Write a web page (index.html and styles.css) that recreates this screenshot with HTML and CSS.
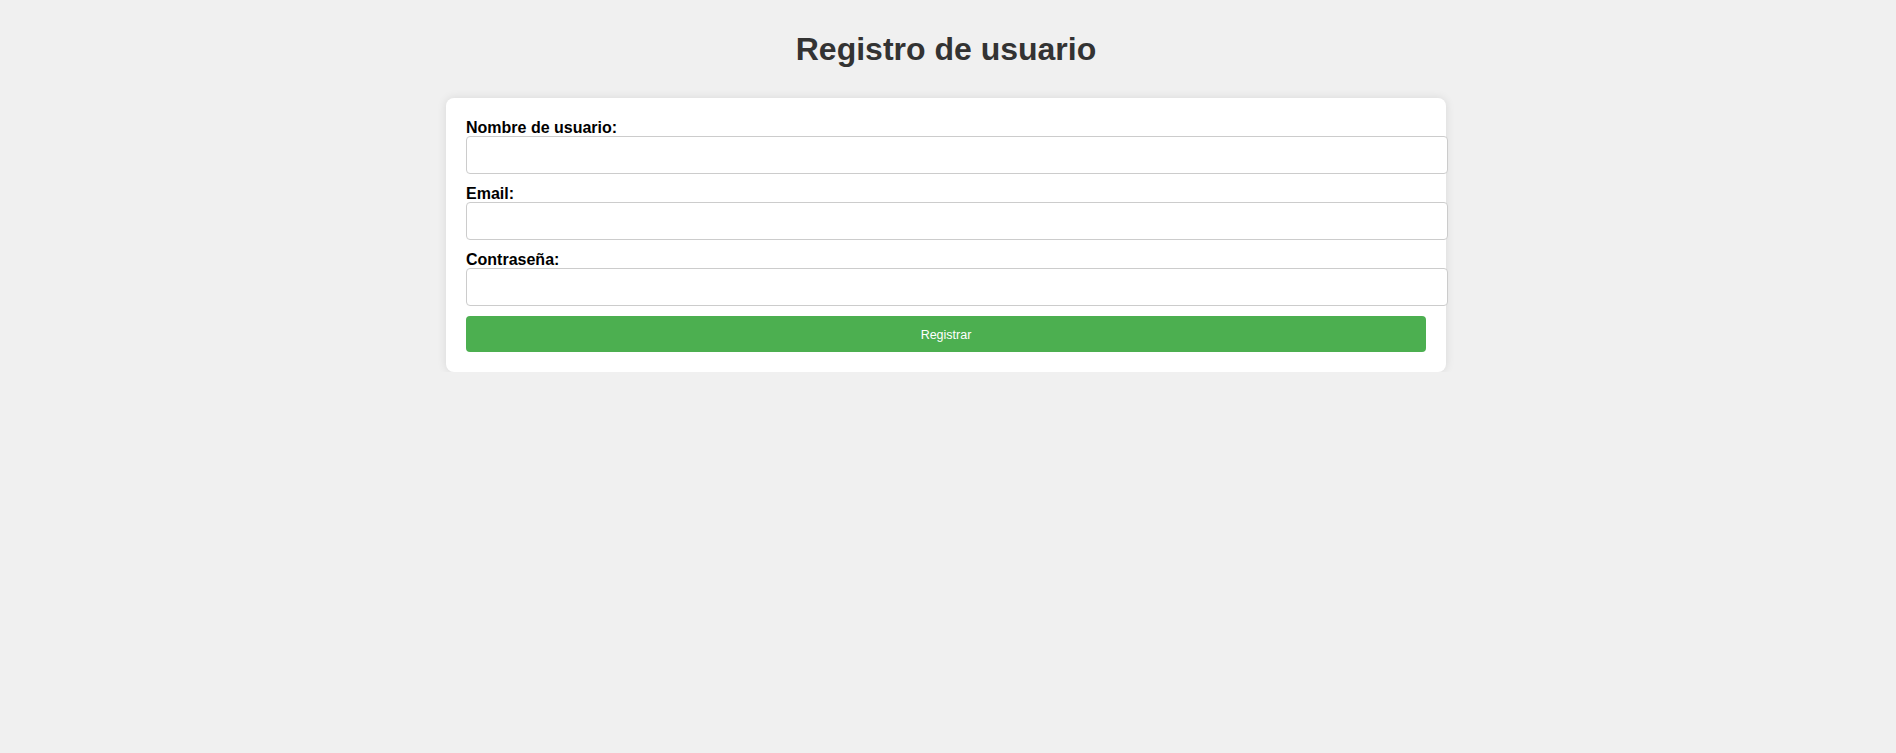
FILE: index.html
```html
<!DOCTYPE html>
<html lang="es">
<head>
<meta charset="utf-8">
<title>Registro de usuario</title>
<link rel="stylesheet" href="styles.css">
</head>
<body>
  <h1 class="title">Registro de usuario</h1>
  <form class="card">
    <label class="field-label" for="username">Nombre de usuario:</label>
    <input class="field-input" type="text" id="username" name="username">
    <label class="field-label" for="email">Email:</label>
    <input class="field-input" type="email" id="email" name="email">
    <label class="field-label" for="password">Contraseña:</label>
    <input class="field-input" type="password" id="password" name="password">
    <button class="submit" type="submit">Registrar</button>
  </form>
</body>
</html>
```

FILE: styles.css
```css
html, body {
  margin: 0;
  background: #f0f0f0;
}

body {
  padding: 0 4px 0 0;
  font-family: "Liberation Sans", Arial, sans-serif;
  color: #000;
}

.title {
  margin: 31px 0 30px;
  text-align: center;
  font-size: 32px;
  font-weight: bold;
  color: #333;
  line-height: 37px;
}

.card {
  width: 960px;
  margin: 0 auto;
  padding: 20px;
  background: #fff;
  border-radius: 8px;
  box-shadow: 0 0 10px rgba(0, 0, 0, 0.1);
}

.field-label {
  display: block;
  padding-top: 1px;
  font-size: 16px;
  font-weight: bold;
  line-height: 17px;
}

.field-input {
  display: block;
  width: 100%;
  height: 16px;
  margin: 0 0 10px;
  padding: 10px;
  border: 1px solid #ccc;
  border-radius: 4px;
  font-size: 13.333px;
  font-family: "Liberation Sans", Arial, sans-serif;
  background: #fff;
  box-sizing: content-box;
}

.submit {
  display: block;
  width: 100%;
  height: 36px;
  padding: 11px 10px 9px;
  border: none;
  border-radius: 4px;
  background: #4caf50;
  color: #fff;
  font-family: "Liberation Sans", Arial, sans-serif;
  font-size: 12.5px;
  line-height: 16px;
  cursor: pointer;
}
```
